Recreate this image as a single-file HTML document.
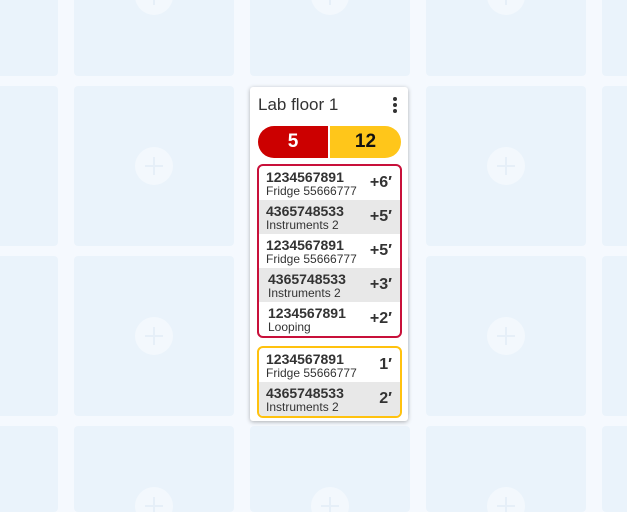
<!DOCTYPE html>
<html><head><style>
html,body{margin:0;width:627px;height:512px;overflow:hidden}
body{background:#f5f9fe;font-family:"Liberation Sans",sans-serif}
#w{position:relative;width:627px;height:512px;overflow:hidden}
.t{position:absolute;width:160px;height:160px;background:#eaf3fb;border-radius:4px}
.c{position:absolute;width:38px;height:38px;border-radius:50%;background:#f3f8fd}
.c:before,.c:after{content:"";position:absolute;background:#e6eff8;left:18px;top:10px;width:2px;height:18px}
.c:after{left:10px;top:18px;width:18px;height:2px}
.card{position:absolute;left:250px;top:87px;width:158px;height:334px;background:#fff;border-radius:3px;box-shadow:0 1px 4px rgba(0,0,0,.3)}
.title{position:absolute;left:8px;top:8px;font-size:17px;color:#333}
.dots{position:absolute;left:143px;top:10px;width:4px}
.dots i{display:block;width:4px;height:4px;border-radius:50%;background:#333;margin-bottom:2px}
.pill{position:absolute;top:39px;height:32px;font-weight:bold;font-size:19px;line-height:32px;text-align:center}
.box{position:absolute;left:7px;width:141px;border:2px solid;border-radius:6px;overflow:hidden}
.row{height:34px;position:relative}
.row:nth-child(even){background:#e8e8e8}
.n{position:absolute;left:7px;top:3px;font-size:14px;font-weight:bold;color:#333}
.s{position:absolute;left:7px;top:18px;font-size:12px;color:#333}
.v{position:absolute;right:8px;top:8px;font-size:16px;font-weight:bold;color:#333}
</style></head><body><div id="w">
<div class="t" style="left:-102px;top:-84px"></div><div class="t" style="left:74px;top:-84px"></div><div class="t" style="left:250px;top:-84px"></div><div class="t" style="left:426px;top:-84px"></div><div class="t" style="left:602px;top:-84px"></div>
<div class="t" style="left:-102px;top:86px"></div><div class="t" style="left:74px;top:86px"></div><div class="t" style="left:426px;top:86px"></div><div class="t" style="left:602px;top:86px"></div>
<div class="t" style="left:-102px;top:256px"></div><div class="t" style="left:74px;top:256px"></div><div class="t" style="left:250px;top:256px"></div><div class="t" style="left:426px;top:256px"></div><div class="t" style="left:602px;top:256px"></div>
<div class="t" style="left:-102px;top:426px;height:86px"></div><div class="t" style="left:74px;top:426px;height:86px"></div><div class="t" style="left:250px;top:426px;height:86px"></div><div class="t" style="left:426px;top:426px;height:86px"></div><div class="t" style="left:602px;top:426px;height:86px"></div>
<div class="c" style="left:135px;top:-23px"></div><div class="c" style="left:311px;top:-23px"></div><div class="c" style="left:487px;top:-23px"></div>
<div class="c" style="left:135px;top:147px"></div><div class="c" style="left:487px;top:147px"></div>
<div class="c" style="left:135px;top:317px"></div><div class="c" style="left:487px;top:317px"></div>
<div class="c" style="left:135px;top:487px"></div><div class="c" style="left:311px;top:487px"></div><div class="c" style="left:487px;top:487px"></div>
<div class="card">
<div class="title">Lab floor 1</div>
<div class="dots"><i></i><i></i><i></i></div>
<div class="pill" style="left:8px;width:70px;background:#cc0000;color:#fff;border-radius:16px 0 0 16px">5</div>
<div class="pill" style="left:80px;width:71px;background:#ffc61a;color:#111;border-radius:0 16px 16px 0">12</div>
<div class="box" style="top:77px;border-color:#c8103a">
<div class="row"><div class="n">1234567891</div><div class="s">Fridge 55666777</div><div class="v">+6′</div></div>
<div class="row"><div class="n">4365748533</div><div class="s">Instruments 2</div><div class="v">+5′</div></div>
<div class="row"><div class="n">1234567891</div><div class="s">Fridge 55666777</div><div class="v">+5′</div></div>
<div class="row"><div class="n" style="left:9px">4365748533</div><div class="s" style="left:9px">Instruments 2</div><div class="v">+3′</div></div>
<div class="row"><div class="n" style="left:9px">1234567891</div><div class="s" style="left:9px">Looping</div><div class="v">+2′</div></div>
</div>
<div class="box" style="top:259px;border-color:#ffc20e">
<div class="row"><div class="n">1234567891</div><div class="s">Fridge 55666777</div><div class="v">1′</div></div>
<div class="row"><div class="n">4365748533</div><div class="s">Instruments 2</div><div class="v">2′</div></div>
</div>
</div>
</div></body></html>
